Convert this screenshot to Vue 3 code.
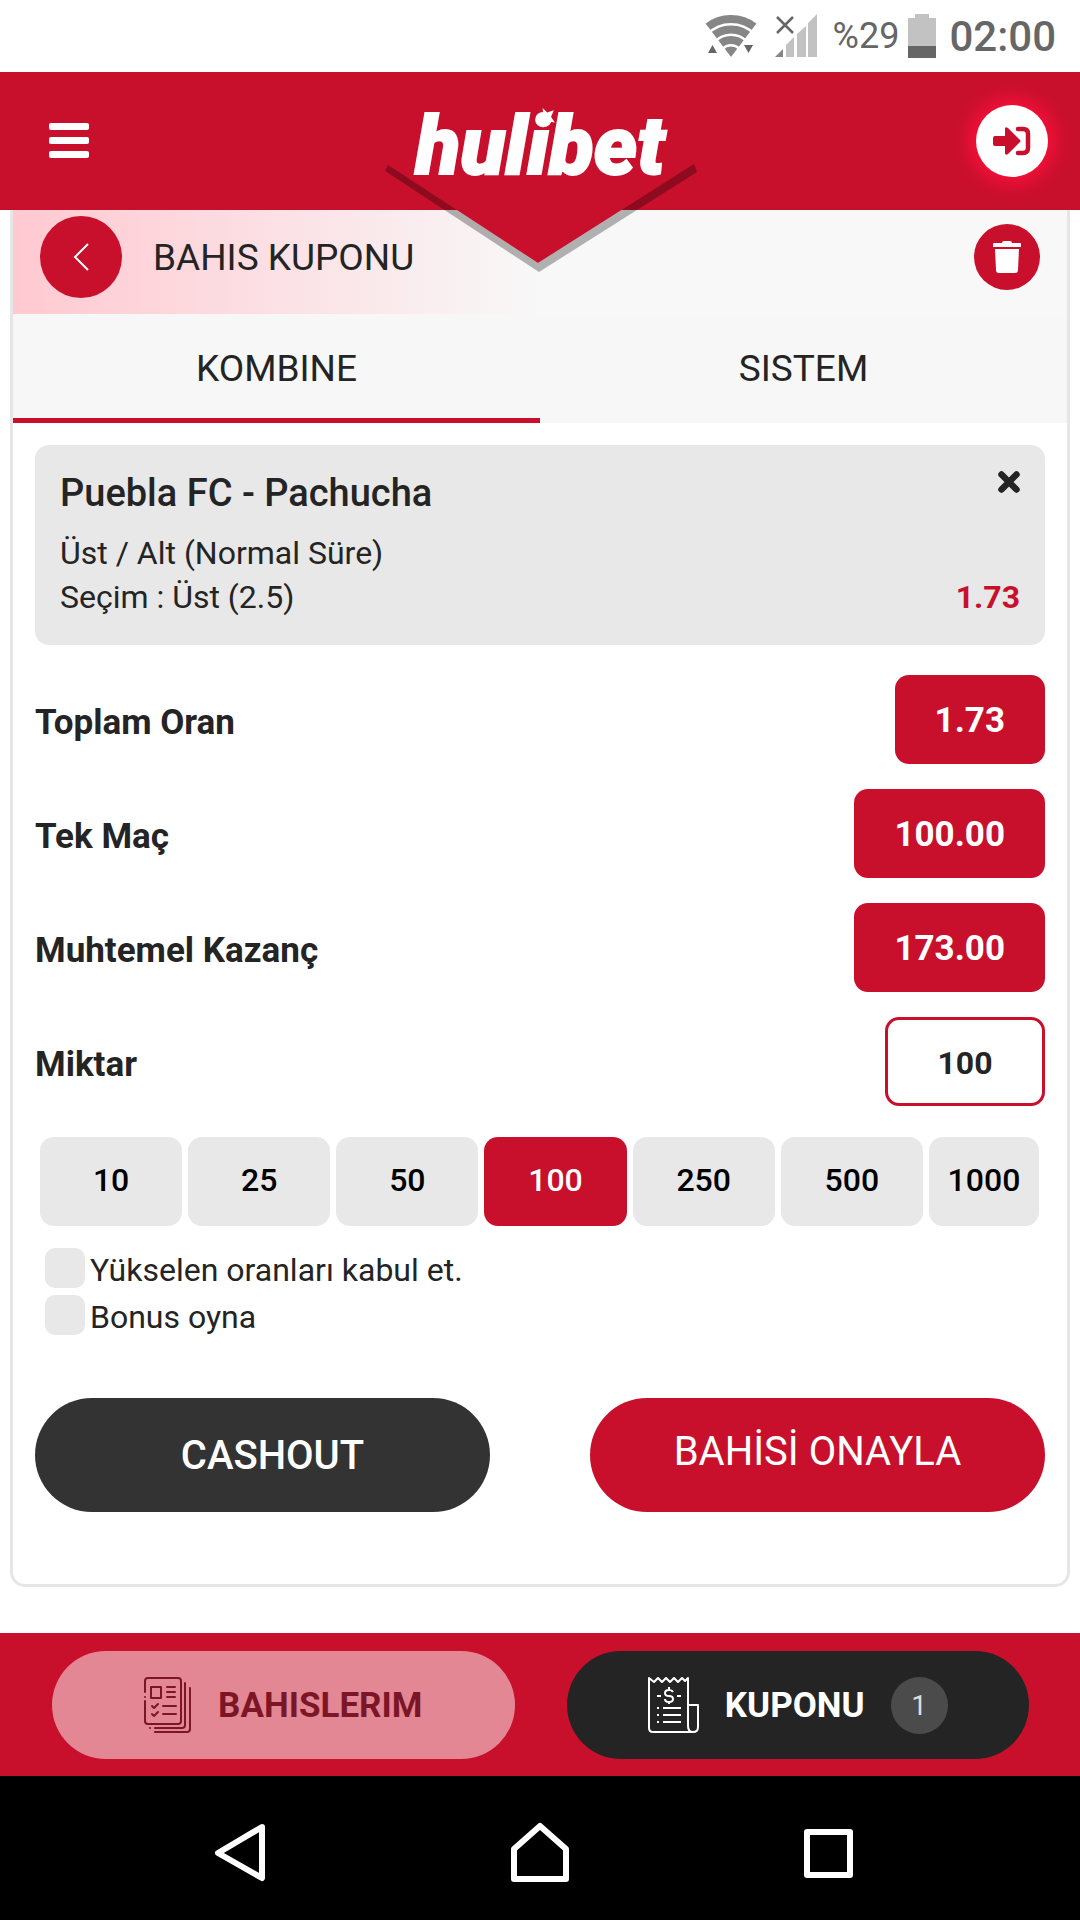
<script setup>
import { ref } from 'vue'

const tabs = ['KOMBINE', 'SISTEM']
const activeTab = ref('KOMBINE')
const amounts = [10, 25, 50, 100, 250, 500, 1000]
const stake = ref('100')
const totals = [
  { label: 'Toplam Oran', value: '1.73' },
  { label: 'Tek Maç', value: '100.00' },
  { label: 'Muhtemel Kazanç', value: '173.00' },
]
const options = [
  { id: 'rising', label: 'Yükselen oranları kabul et.' },
  { id: 'bonus', label: 'Bonus oyna' },
]
</script>

<template>
  <div class="page">
    <div class="status">
      <svg class="wifi" width="52" height="44" viewBox="0 0 52 44">
        <defs>
          <clipPath id="wedge"><path d="M26 43 L-2 6 L12 -4 H40 L54 6 Z" /></clipPath>
        </defs>
        <g clip-path="url(#wedge)" fill="none" stroke="#868686" stroke-width="8">
          <circle cx="26" cy="43" r="38" />
          <circle cx="26" cy="43" r="27.500" />
          <circle cx="26" cy="43" r="17" />
          <circle cx="26" cy="43" r="5" stroke-width="11" />
        </g>
        <path d="M3 39 L7.500 31 L12 39 Z M39 31 H48 L43.500 39 Z" fill="#666" />
      </svg>
      <svg class="signal" width="43" height="44" viewBox="0 0 43 44">
        <path d="M0 43 L8 35 V43 Z" fill="#868686" />
        <path d="M11 43 V31 L19 23 V43 Z M22 43 V20 L31 12 V43 Z M33 43 V9 L42 0 V43 Z" fill="#c2c2c2" />
        <path d="M2 3 L18 19 M18 3 L2 19" stroke="#666" stroke-width="2.500" />
      </svg>
      <span class="percent">%29</span>
      <svg class="battery" width="28" height="44" viewBox="0 0 28 44">
        <path d="M7 0 H21 V4 H28 V33 H0 V4 H7 Z" fill="#c2c2c2" />
        <path d="M0 32 H28 V44 H0 Z" fill="#666" />
      </svg>
      <span class="clock">02:00</span>
    </div>

    <header class="top">
      <svg class="chevron" width="316" height="112" viewBox="0 0 316 112">
        <path d="M3 3 L153 101 L309 2 Z" fill="#c8102c" />
        <path d="M3 3 L153 101 L309 2 L312 10 L154 110 L0 9 Z" fill="#000" fill-opacity="0.290" />
      </svg>
      <button class="menu" type="button" aria-label="Menu"><i></i><i></i><i></i></button>
      <a class="logo" href="#">
        hulibet
        <svg class="star" width="20" height="20" viewBox="0 0 18 18">
          <path d="M6 1 L10 5 L16 3 L13.500 9 L17 14 L11 13 L7 17 L6 11 L1 8 L6.500 6.500 Z" fill="#fff" />
        </svg>
      </a>
      <button class="login" type="button" aria-label="Login">
        <svg width="38" height="30" viewBox="0 0 38 30">
          <path d="M2 10 H12 V3 Q12 0 15 2 L27 14 Q28 15 27 16 L15 28 Q12 30 12 27 V20 H2 Q0 20 0 18 V12 Q0 10 2 10 Z" fill="#c8102c" />
          <path d="M25 3 H30 Q35 3 35 8 V22 Q35 27 30 27 H25" fill="none" stroke="#c8102c" stroke-width="4.500" stroke-linecap="round" />
        </svg>
      </button>
    </header>

    <main class="content">
      <section class="card">
        <div class="card-head">
          <button class="back" type="button" aria-label="Back">
            <svg width="18" height="30" viewBox="0 0 18 30">
              <path d="M16 2 L3 15 L16 28" fill="none" stroke="#fff" stroke-width="2" />
            </svg>
          </button>
          <h1>BAHIS KUPONU</h1>
          <button class="trash" type="button" aria-label="Delete">
            <svg width="28" height="32" viewBox="0 0 28 32">
              <path d="M1 2 H9 Q9 0 11 0 H17 Q19 0 19 2 H27 Q28 2 28 3 V6 H0 V3 Q0 2 1 2 Z M2 8 H26 L25 29 Q25 32 22 32 H6 Q3 32 3 29 Z" fill="#fff" />
            </svg>
          </button>
        </div>

        <nav class="tabs">
          <button
            v-for="tab in tabs"
            :key="tab"
            type="button"
            :class="{ active: tab === activeTab }"
            @click="activeTab = tab"
          >{{ tab }}</button>
        </nav>

        <div class="body">
          <article class="bet">
            <div>
              <h2>Puebla FC - Pachucha</h2>
              <p>Üst / Alt (Normal Süre)</p>
              <p>Seçim : Üst (2.5)</p>
            </div>
            <div class="bet-side">
              <button class="remove" type="button" aria-label="Remove">
                <svg width="22" height="22" viewBox="0 0 22 22">
                  <path d="M3.500 3.500 L18.500 18.500 M18.500 3.500 L3.500 18.500" stroke="#242424" stroke-width="6.500" stroke-linecap="round" />
                </svg>
              </button>
              <strong>1.73</strong>
            </div>
          </article>

          <div class="rows">
            <div v-for="row in totals" :key="row.label" class="row">
              <span class="label">{{ row.label }}</span>
              <output class="value">{{ row.value }}</output>
            </div>
            <div class="row">
              <label class="label" for="stake">Miktar</label>
              <input id="stake" v-model="stake" class="stake" type="text" inputmode="decimal" />
            </div>
          </div>

          <div class="amounts">
            <button
              v-for="amount in amounts"
              :key="amount"
              type="button"
              :class="{ active: String(amount) === stake }"
              @click="stake = String(amount)"
            >{{ amount }}</button>
          </div>

          <div class="options">
            <div v-for="option in options" :key="option.id" class="option">
              <input :id="option.id" type="checkbox" />
              <label :for="option.id">{{ option.label }}</label>
            </div>
          </div>

          <div class="actions">
            <button class="cashout" type="button">CASHOUT</button>
            <button class="confirm" type="button">BAHİSİ ONAYLA</button>
          </div>
        </div>
      </section>
    </main>

    <footer class="bottom">
      <button class="bets" type="button">
        <svg width="48" height="56" viewBox="0 0 48 56" fill="none" stroke="#7c1627" stroke-width="2" stroke-linecap="round" stroke-linejoin="round">
          <path d="M1 15 V4 Q1 1 4 1 H34 Q37 1 37 4 V44 Q37 47 34 47 H4 Q1 47 1 44 V24 M1 20 V20" />
          <path d="M7 10 H17 V21 H7 Z M23 10 H31 M23 15 H31 M23 20 H31 M19 29 H32 M19 37 H32" />
          <path d="M8 29 L10 31 L14 27 M8 37 L10 39 L14 35" />
          <path d="M41 6 V48 Q41 51 38 51 H11 M6 51 H6 M46 11 V52 Q46 55 43 55 H11" />
        </svg>
        BAHISLERIM
      </button>
      <button class="coupon" type="button">
        <svg width="51" height="56" viewBox="0 0 51 56" fill="none" stroke="#fff" stroke-width="2" stroke-linejoin="round">
          <path d="M1 1 V51 Q1 55 5 55 H45 Q50 55 50 50 V28 H40 V1 L37 4 L34 1 L30 5 L26 1 L22 5 L18 1 L14 5 L10 1 L6 5 Z M40 28 V49 Q40 55 45 55" />
          <path d="M9 19 H13 M29 19 H33 M15 31 H33 M15 38 H33 M15 45 H33 M9 31 H11 M9 38 H11 M9 45 H11" />
          <path d="M25 15 Q24 13 21 13 Q17 13 17 16 Q17 19 21 19 Q25 19 25 22 Q25 25 21 25 Q17 25 17 22 M21 10 V13 M21 25 V27" />
        </svg>
        KUPONU
        <span class="badge">1</span>
      </button>
    </footer>

    <nav class="system">
      <button type="button" aria-label="Back">
        <svg width="80" height="60" viewBox="0 0 80 60"><path d="M52 5 L8 31 L52 56 Z" /></svg>
      </button>
      <button type="button" aria-label="Home">
        <svg width="80" height="60" viewBox="0 0 80 60"><path d="M14 27 L40 4 L66 27 V57 H14 Z" /></svg>
      </button>
      <button type="button" aria-label="Recent">
        <svg width="80" height="60" viewBox="0 0 80 60"><path d="M17 10 H60 V53 H17 Z" /></svg>
      </button>
    </nav>
  </div>
</template>

<style>
body {
  margin: 0;
  background: #fff;
}
</style>

<style scoped>
.page {
  display: flex;
  flex-direction: column;
  min-height: 100vh;
  color: #242424;
  font-family: Roboto, "Liberation Sans", sans-serif;
}
button,
input {
  margin: 0;
  padding: 0;
  border: 0;
  background: none;
  color: inherit;
  font: inherit;
}
svg {
  display: block;
  flex: none;
}
h1,
h2,
p {
  margin: 0;
}

.status {
  display: flex;
  align-items: center;
  justify-content: flex-end;
  height: 72px;
  padding-right: 24px;
  color: #666;
}
.wifi {
  margin-right: 18px;
}
.signal {
  margin-right: 15px;
}
.percent {
  margin-right: 9px;
  font-size: 36px;
}
.battery {
  margin-right: 13px;
}
.clock {
  font-size: 42px;
  font-weight: 500;
}

.top {
  position: relative;
  z-index: 1;
  display: grid;
  grid-template-columns: 1fr auto 1fr;
  align-items: center;
  height: 138px;
  padding: 0 32px;
  background: #c8102c;
}
.chevron {
  position: absolute;
  top: 90px;
  left: 50%;
  margin-left: -155px;
}
.menu {
  display: flex;
  flex-direction: column;
  gap: 7px;
  justify-self: start;
  padding: 0 17px 2px;
}
.menu i {
  width: 40px;
  height: 7px;
  border-radius: 2px;
  background: #fff;
}
.logo {
  position: relative;
  padding-top: 10px;
  color: #fff;
  font-size: 82px;
  font-style: italic;
  font-weight: 900;
  line-height: 94px;
  text-decoration: none;
  -webkit-text-stroke: 2px #fff;
}
.star {
  position: absolute;
  top: 18px;
  left: 120px;
}
.login {
  display: flex;
  align-items: center;
  justify-content: center;
  justify-self: end;
  width: 72px;
  height: 72px;
  border-radius: 50%;
  background: #fff;
  box-shadow: 0 0 20px 6px #ff103c;
}

.content {
  flex: 1;
  padding: 0 10px 46px;
}
.card {
  border: 3px solid #e6e6e6;
  border-top: 0;
  border-radius: 0 0 15px 15px;
}
.card-head {
  display: flex;
  align-items: center;
  height: 104px;
  padding: 0 27px;
  background: linear-gradient(90deg, #ffc9d1, #f8f8f8 50%);
}
.back,
.trash {
  display: flex;
  align-items: center;
  justify-content: center;
  border-radius: 50%;
  background: #c8102c;
}
.back {
  width: 82px;
  height: 82px;
  margin-bottom: 10px;
}
.card-head h1 {
  flex: 1;
  padding: 0 0 10px 31px;
  font-size: 37px;
  font-weight: 400;
}
.trash {
  width: 66px;
  height: 66px;
  margin-bottom: 10px;
}
.tabs {
  display: grid;
  grid-template-columns: 1fr 1fr;
  background: #f7f7f7;
}
.tabs button {
  height: 109px;
  padding-top: 5px;
  border-bottom: 5px solid transparent;
  font-size: 37px;
}
.tabs .active {
  border-color: #c8102c;
}

.body {
  padding: 22px 22px 72px;
}
.bet {
  display: flex;
  justify-content: space-between;
  padding: 26px 25px;
  border-radius: 14px;
  background: #e8e8e8;
  font-size: 32px;
  line-height: 44px;
}
.bet h2 {
  margin-bottom: 16px;
  font-size: 38px;
  font-weight: 500;
}
.bet-side {
  display: flex;
  flex-direction: column;
  align-items: flex-end;
  justify-content: space-between;
}
.bet-side strong {
  color: #c8102c;
  font-weight: 700;
}
.rows {
  display: flex;
  flex-direction: column;
  gap: 25px;
  margin: 30px 0 31px;
}
.row {
  display: flex;
  align-items: center;
  justify-content: space-between;
  height: 89px;
  font-size: 35px;
  font-weight: 700;
}
.label {
  padding-top: 5px;
}
.value,
.stake {
  box-sizing: border-box;
  height: 89px;
  border-radius: 14px;
  line-height: 91px;
}
.value {
  padding: 0 40px;
  background: #c8102c;
  color: #fff;
}
.stake {
  width: 160px;
  padding-top: 3px;
  border: 3px solid #c8102c;
  font-size: 32px;
  font-weight: 700;
  line-height: 80px;
  text-align: center;
}
.amounts {
  display: grid;
  grid-template-columns: repeat(6, 142fr) 110fr;
  gap: 6px;
  margin: 0 6px 22px 5px;
}
.amounts button {
  height: 89px;
  padding-bottom: 4px;
  border-radius: 14px;
  background: #e8e8e8;
  color: #000;
  font-size: 32px;
  font-weight: 500;
}
.amounts .active {
  background: #c8102c;
  color: #fff;
}
.options {
  display: flex;
  flex-direction: column;
  gap: 7px;
  margin: 0 10px 63px;
}
.option {
  display: flex;
  align-items: center;
  gap: 5px;
  height: 40px;
  font-size: 32px;
  line-height: 40px;
}
.option label {
  padding-top: 3px;
}
.option input {
  width: 40px;
  height: 40px;
  border-radius: 10px;
  background: #e8e8e8;
  appearance: none;
}
.option input:checked {
  background: #c8102c;
}
.actions {
  display: grid;
  grid-template-columns: 1fr 1fr;
  gap: 100px;
}
.actions button {
  height: 114px;
  border-radius: 57px;
  color: #fff;
  font-size: 40px;
}
.actions .cashout {
  padding-left: 20px;
  background: #333;
  font-weight: 500;
}
.actions .confirm {
  padding-bottom: 8px;
  background: #c8102c;
}

.bottom {
  display: grid;
  grid-template-columns: 1fr 1fr;
  gap: 52px;
  padding: 18px 51px 17px 52px;
  background: #c8102c;
}
.bottom button {
  display: flex;
  align-items: center;
  justify-content: center;
  gap: 26px;
  height: 108px;
  border-radius: 54px;
  font-size: 35px;
  font-weight: 700;
}
.bets {
  background: #e38795;
  color: #7c1627;
}
.coupon {
  background: #242424;
  color: #fff;
}
.badge {
  width: 57px;
  height: 57px;
  border-radius: 50%;
  background: #4b4b4b;
  color: #ddd;
  font-size: 28px;
  font-weight: 400;
  line-height: 57px;
}

.system {
  display: flex;
  align-items: center;
  justify-content: center;
  gap: 210px;
  height: 144px;
  padding-top: 8px;
  box-sizing: border-box;
  background: #000;
}
.system path {
  fill: none;
  stroke: #fff;
  stroke-width: 6px;
  stroke-linejoin: round;
}
</style>
